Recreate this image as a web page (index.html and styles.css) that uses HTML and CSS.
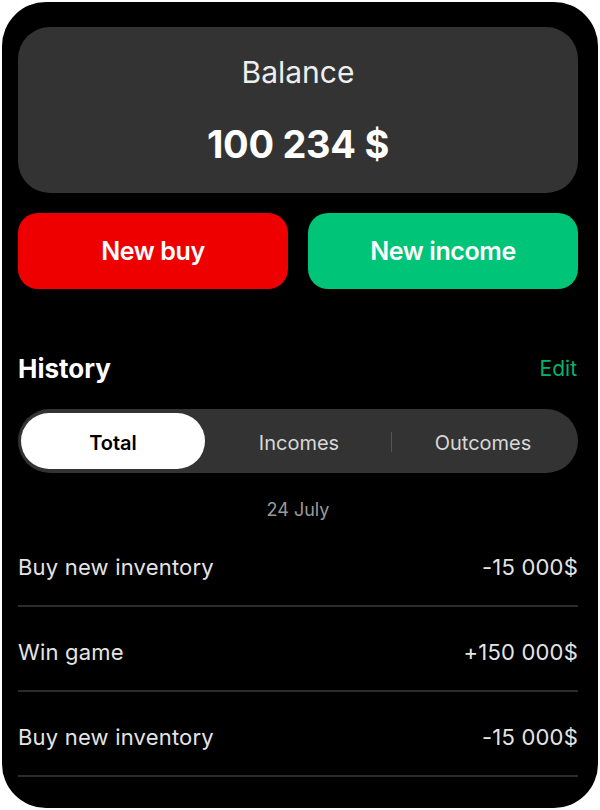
FILE: index.html
```html
<!DOCTYPE html>
<html>
<head>
<meta charset="utf-8">
<link rel="stylesheet" href="styles.css">
</head>
<body>
<div class="frame">
  <div class="balance">
    <div class="balance-label">Balance</div>
    <div class="balance-value">100 234 $</div>
  </div>
  <div class="actions">
    <div class="btn btn-buy">New buy</div>
    <div class="btn btn-income">New income</div>
  </div>
  <div class="history-head">
    <div class="history-title">History</div>
    <div class="history-edit">Edit</div>
  </div>
  <div class="segment">
    <div class="seg seg-active">Total</div>
    <div class="seg">Incomes</div>
    <div class="seg seg-divided">Outcomes</div>
  </div>
  <div class="date">24 July</div>
  <div class="rows">
    <div class="row"><span>Buy new inventory</span><span>-15 000$</span></div>
    <div class="row"><span>Win game</span><span>+150 000$</span></div>
    <div class="row"><span>Buy new inventory</span><span>-15 000$</span></div>
  </div>
</div>
</body>
</html>
```
FILE: styles.css
```css
* { box-sizing: border-box; }
html, body { margin: 0; padding: 0; background: #fff; }
body { font-family: Inter, "Noto Sans", sans-serif; }
.frame {
  margin: 2px;
  width: 596px;
  height: 806px;
  background: #000;
  border-radius: 44px;
  padding: 25px 20px 0 16px;
  overflow: hidden;
}
.balance {
  height: 166px;
  background: #333333;
  border-radius: 32px;
  display: flex;
  flex-direction: column;
  align-items: center;
  padding-top: 27px;
}
.balance-label {
  color: #eeeeee;
  font-size: 30px;
  line-height: 36px;
  font-weight: 400;
}
.balance-value {
  color: #ffffff;
  font-size: 38px;
  line-height: 46px;
  font-weight: 700;
  margin-top: 31px;
  letter-spacing: -0.3px;
}
.actions {
  display: flex;
  gap: 20px;
  margin-top: 20px;
}
.btn {
  flex: 1;
  height: 76px;
  border-radius: 20px;
  display: flex;
  align-items: center;
  justify-content: center;
  color: #fff;
  font-size: 25px;
  font-weight: 600;
  letter-spacing: -0.4px;
}
.btn-buy { background: #ee0000; }
.btn-income { background: #00c477; }
.history-head {
  display: flex;
  justify-content: space-between;
  align-items: center;
  margin-top: 64px;
  height: 30px;
}
.history-title {
  color: #fff;
  font-size: 26px;
  font-weight: 700;
}
.history-edit {
  color: #00b46c;
  font-size: 21px;
  font-weight: 400;
  padding-right: 1px;
}
.segment {
  margin-top: 26px;
  height: 64px;
  background: #333333;
  border-radius: 32px;
  padding: 4px 3px;
  display: flex;
}
.seg {
  flex: 1;
  display: flex;
  align-items: center;
  justify-content: center;
  color: #d8d8d8;
  font-size: 20px;
  padding-top: 3px;
  position: relative;
}
.seg-active {
  background: #fff;
  color: #000;
  font-weight: 600;
  border-radius: 28px;
  margin-right: 2px;
}
.seg-divided::before {
  content: "";
  position: absolute;
  left: 0;
  top: 19px;
  width: 1px;
  height: 20px;
  background: #555;
}
.date {
  margin-top: 25px;
  text-align: center;
  color: #9a9a9a;
  font-size: 18px;
  line-height: 24px;
}
.rows {
  margin-top: 0;
}
.row {
  height: 85px;
  border-bottom: 2px solid #2c2c2c;
  display: flex;
  justify-content: space-between;
  align-items: center;
  padding-top: 7px;
  color: #e4e4e4;
  font-size: 22px;
  letter-spacing: 0.2px;
}
```
